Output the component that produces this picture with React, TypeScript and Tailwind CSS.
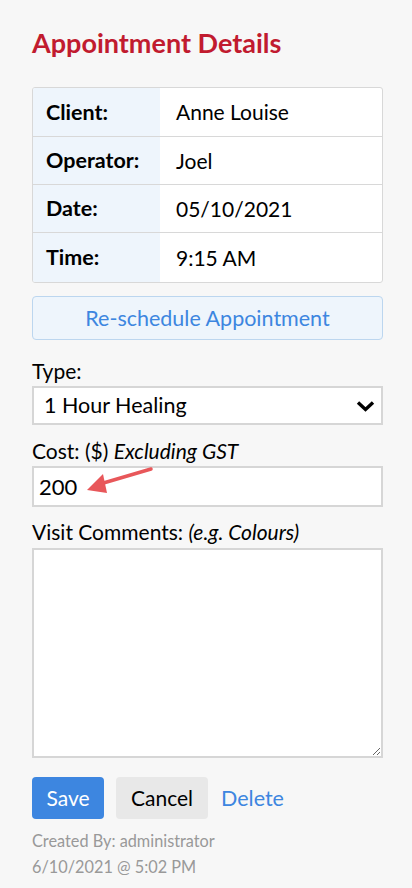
import React from "react";

const font = { fontFamily: "Lato, 'Noto Sans', sans-serif" };

export default function App() {
  const rows: [string, string][] = [
    ["Client:", "Anne Louise"],
    ["Operator:", "Joel"],
    ["Date:", "05/10/2021"],
    ["Time:", "9:15 AM"],
  ];
  return (
    <div className="min-h-[888px] w-[412px] bg-[#f7f7f7] pl-[32px] pr-[29px] pt-[25px] text-black" style={font}>
      <h1 className="text-[27px] font-bold leading-[36px] text-[#c11b2f]">Appointment Details</h1>
      <div className="mt-[26px] overflow-hidden rounded-[3px] border border-[#d8d8d8] bg-white">
        {rows.map(([k, v], i) => (
          <div key={k} className={`flex ${i > 0 ? "border-t border-[#d8d8d8]" : ""} ${i === 3 ? "h-[50px]" : "h-[48px]"}`}>
            <div className="flex w-[127px] items-center bg-[#eef5fc] pl-[13px] text-[21.5px] font-bold">{k}</div>
            <div className="flex flex-1 items-center pl-[16px] text-[21px]">{v}</div>
          </div>
        ))}
      </div>
      <button className="mt-[13px] flex h-[44px] w-full items-center justify-center rounded-[4px] border border-[#bcd6ef] bg-[#eef5fc] text-[21.5px] text-[#3d86e0]">
        Re-schedule Appointment
      </button>
      <div className="mt-[18px] text-[21px] leading-[26px]">Type:</div>
      <div className="mt-[2px] flex h-[39px] items-center justify-between border-2 border-[#d6d6d6] bg-white pl-[10px] pr-[6px] text-[21.5px]">
        <span>1 Hour Healing</span>
        <svg width="19" height="12" viewBox="0 0 19 12">
          <polyline points="2,2.5 9.5,9.5 17,2.5" fill="none" stroke="#000" strokeWidth="3.4" />
        </svg>
      </div>
      <div className="mt-[13px] text-[21px] leading-[26px]">
        Cost: ($) <i>Excluding GST</i>
      </div>
      <div className="relative mt-[2px] flex h-[41px] items-center border-2 border-[#d6d6d6] bg-white pl-[5px] text-[22px]">
        <span>200</span>
        <svg className="absolute left-0 top-0 overflow-visible" width="130" height="36" viewBox="0 0 130 36">
          <line x1="117" y1="1" x2="66" y2="16" stroke="#e8575a" strokeWidth="3.5" strokeLinecap="round" />
          <polygon points="53,22 69,6 73,25" fill="#e8575a" />
        </svg>
      </div>
      <div className="mt-[12px] text-[21px] leading-[26px]">
        Visit Comments: <i>(e.g. Colours)</i>
      </div>
      <textarea className="mt-[3px] block h-[210px] w-full border-2 border-[#d6d6d6] bg-white" />
      <div className="mt-[19px] flex items-center">
        <button className="h-[42px] w-[72px] rounded-[4px] bg-[#3d86e0] text-[21px] text-white">Save</button>
        <button className="ml-[12px] h-[42px] w-[92px] rounded-[4px] bg-[#e8e8e8] text-[21px] text-black">Cancel</button>
        <span className="ml-[13px] text-[21.5px] text-[#3d86e0]">Delete</span>
      </div>
      <div className="mt-[9px] text-[16.3px] leading-[26px] text-[#999]">
        <div>Created By: administrator</div>
        <div>6/10/2021 @ 5:02 PM</div>
      </div>
    </div>
  );
}
